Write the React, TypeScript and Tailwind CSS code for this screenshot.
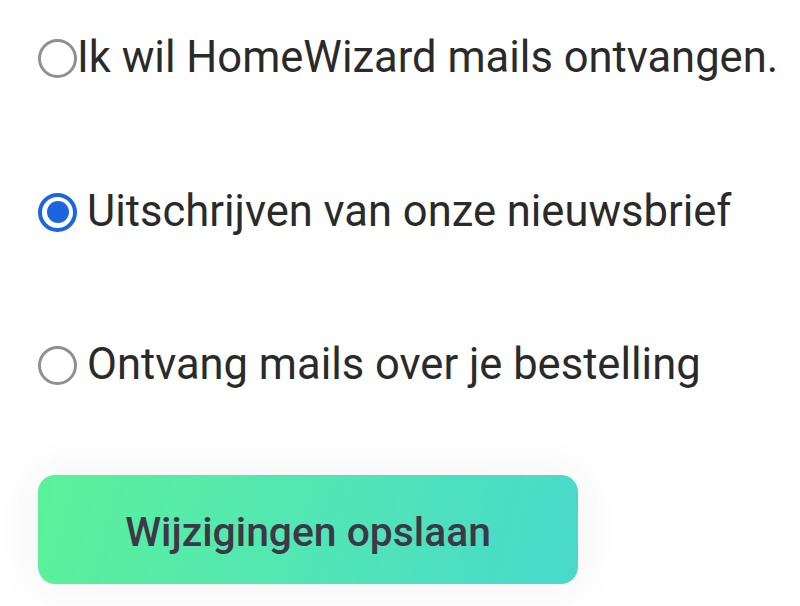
import React from "react";

function Radio({ checked }: { checked?: boolean }) {
  if (checked) {
    return (
      <span className="flex h-[39px] w-[39px] shrink-0 items-center justify-center rounded-full border-[4px] border-[#1b66e0] bg-white">
        <span className="h-[22px] w-[22px] rounded-full bg-[#1b66e0]" />
      </span>
    );
  }
  return (
    <span className="block h-[39px] w-[39px] shrink-0 rounded-full border-[3px] border-[#8f8f94] bg-white" />
  );
}

export default function App() {
  return (
    <main className="min-h-[606px] w-[800px] bg-white pl-[38px] pt-[38px] font-['Roboto',sans-serif] text-[#2a2a2a]">
      <div className="flex flex-col">
        <label className="flex h-[40px] items-center whitespace-nowrap text-[43.5px]">
          <Radio />
          <span>Ik wil HomeWizard mails ontvangen.</span>
        </label>
        <label className="mt-[114px] flex h-[40px] items-center gap-[10px] whitespace-nowrap text-[43.5px]">
          <Radio checked />
          <span>Uitschrijven van onze nieuwsbrief</span>
        </label>
        <label className="mt-[113px] flex h-[40px] items-center gap-[10px] whitespace-nowrap text-[43.5px]">
          <Radio />
          <span>Ontvang mails over je bestelling</span>
        </label>
        <button className="mt-[90px] flex h-[109px] w-[540px] items-center justify-center rounded-[17px] bg-[linear-gradient(105deg,#5bf19a_0%,#52e6b4_50%,#48d9cb_100%)] pt-[6px] text-[40.8px] font-medium text-[#3d3747] shadow-[0_0_40px_10px_rgba(0,0,0,0.04)]">
          Wijzigingen opslaan
        </button>
      </div>
    </main>
  );
}
